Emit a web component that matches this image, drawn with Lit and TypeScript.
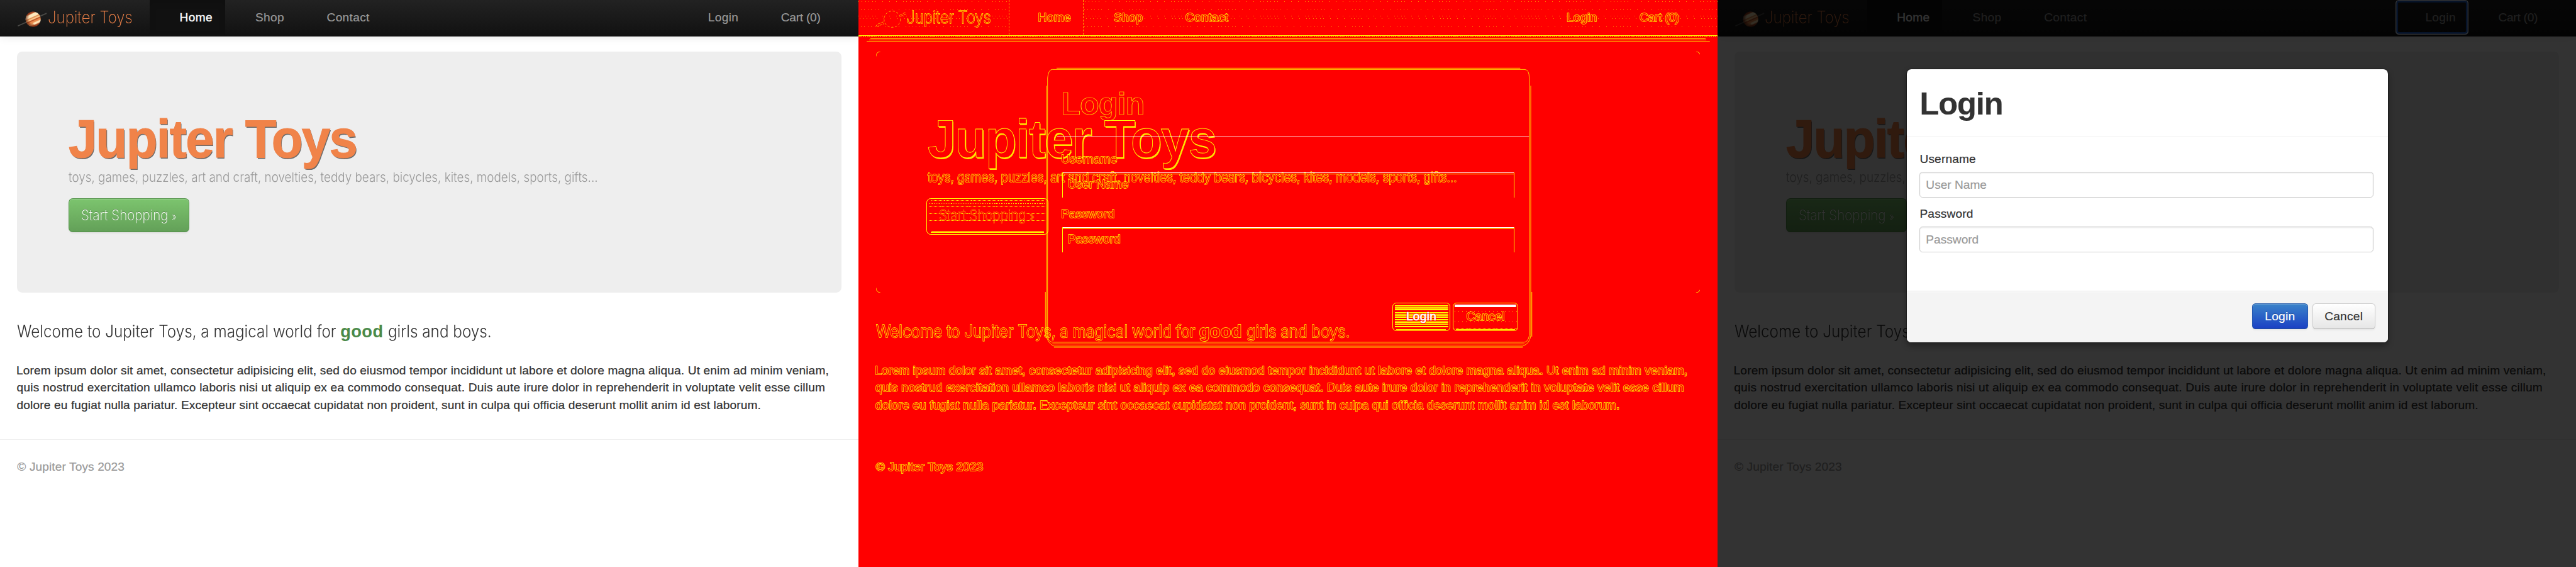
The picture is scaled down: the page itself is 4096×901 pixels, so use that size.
import { LitElement, html, css, svg } from "lit";

const PARAGRAPH = [
  { cls: "l1", text: "Lorem ipsum dolor sit amet, consectetur adipisicing elit, sed do eiusmod tempor incididunt ut labore et dolore magna aliqua. Ut enim ad minim veniam," },
  { cls: "l2", text: "quis nostrud exercitation ullamco laboris nisi ut aliquip ex ea commodo consequat. Duis aute irure dolor in reprehenderit in voluptate velit esse cillum" },
  { cls: "l3", text: "dolore eu fugiat nulla pariatur. Excepteur sint occaecat cupidatat non proident, sunt in culpa qui officia deserunt mollit anim id est laborum." },
];

/** The shop's home page. The "trace" attribute draws only its contours. */
class ToyPage extends LitElement {
  static properties = {
    trace: { type: Boolean, reflect: true },
    focused: { type: Boolean, reflect: true },
  };

  static styles = css`
    :host {
      display: block;
      width: 2000px;
      height: 1320px;
      background: #fff;
      color: #333;
      font: 28px/40px "Liberation Sans", Arial, sans-serif;
      white-space: nowrap;
    }
    .thin {
      display: inline-block;
      font-family: Inter, sans-serif;
      font-weight: 200;
      transform-origin: 0 0;
    }
    .nav {
      position: relative;
      z-index: 1;
      display: flex;
      height: 85px;
      padding: 0 60px 0 40px;
      box-sizing: border-box;
      background: linear-gradient(#222, #111);
      box-shadow: 0 2px 20px rgba(0, 0, 0, 0.1);
      line-height: 81px;
      color: #999;
    }
    .planet {
      width: 73px;
      height: 80px;
      margin-right: -2px;
      flex: none;
    }
    .brand {
      width: 238px;
      color: #f08349;
      font-size: 40px;
    }
    .brand .thin {
      font-weight: 250;
      transform: scaleX(0.882);
    }
    .item {
      height: 80px;
      box-sizing: border-box;
      padding-right: 29px;
      text-align: right;
      letter-spacing: 0.5px;
      -webkit-text-stroke: 0.3px currentColor;
    }
    .home {
      width: 175px;
      background: #111;
      box-shadow: inset 0 6px 16px rgba(0, 0, 0, 0.125);
      color: #fff;
      -webkit-text-stroke: 0.5px #fff;
    }
    .shop { width: 167px; }
    .contact { width: 199px; }
    .login {
      width: 170px;
      margin-left: auto;
      border-radius: 8px;
    }
    .cart {
      width: 191px;
      letter-spacing: -0.36px;
    }
    :host([focused]) .login {
      box-shadow: inset 0 0 0 2px #fff, inset 0 0 0 6px #2262cc;
    }

    .hero {
      position: relative;
      display: flex;
      flex-direction: column;
      align-items: flex-start;
      height: 561px;
      margin: 35px 40px 0;
      padding: 144px 0 0 120px;
      box-sizing: border-box;
      background: #eee;
      border-radius: 12px;
    }
    .title {
      margin: 0;
      font-size: 124px;
      line-height: 120px;
      letter-spacing: -2.6px;
      transform: scaleX(0.963);
      transform-origin: 0 0;
      color: #f08349;
      -webkit-text-stroke: 1.6px #f08349;
      text-shadow: 2px 3px 0 #6b6b6b;
    }
    .tagline {
      font-size: 30px;
      line-height: 60px;
      color: #999;
    }
    .tagline .thin {
      font-weight: 290;
      transform: scaleX(0.921);
    }
    .start {
      width: 281px;
      height: 79px;
      margin-top: 18px;
      padding-left: 28px;
      box-sizing: border-box;
      border: 2px solid #58974f;
      border-bottom-color: #4f8a48;
      border-radius: 10px;
      background: linear-gradient(#7cc46e, #63a058);
      box-shadow: inset 0 2px 0 rgba(255, 255, 255, 0.2), 0 2px 4px rgba(0, 0, 0, 0.05);
      color: #fff;
      font-size: 34px;
      line-height: 77px;
      text-shadow: 0 -2px 0 rgba(0, 0, 0, 0.25);
    }
    .start .thin {
      font-weight: 250;
      transform: scaleX(0.888);
    }
    .raquo { font-size: 25px; }
    .corners { display: none; }

    .welcome {
      display: flex;
      margin: 71px 40px 0;
      font-size: 39px;
    }
    .welcome .a { width: 753px; }
    .welcome .b { width: 111px; }
    .welcome .thin {
      font-weight: 260;
      transform: scaleX(0.912);
    }
    .good {
      color: #4a8a49;
      font-size: 40px;
      letter-spacing: 0.5px;
    }
    .para {
      margin: 49px 38px 0;
      -webkit-text-stroke: 0.35px #333;
    }
    .l1 { letter-spacing: 0.202px; }
    .l2 { letter-spacing: 0.3px; padding-left: 1px; }
    .l3 { letter-spacing: 0.189px; padding-left: 1px; }
    .rule {
      height: 2px;
      margin-top: 60px;
      background: #eee;
    }
    .foot {
      margin: 42px 40px 0;
      color: #999;
      letter-spacing: 0.15px;
      -webkit-text-stroke: 0.3px #999;
    }

    :host([trace]) {
      background: #f00;
      color: #f00;
    }
    :host([trace]) .nav {
      background:
        linear-gradient(#ff0, #ff0) 0 82px / 100% 1.5px no-repeat,
        repeating-linear-gradient(90deg, #ff0 0 3px, #f00 3px 5px) 0 85px / 100% 1.5px no-repeat,
        repeating-linear-gradient(90deg, #f80 0 1px, #f00 1px 8px) 0 3px / 100% 1.5px no-repeat,
        repeating-linear-gradient(90deg, #f80 0 1px, #f00 1px 8px) 5px 22px / 100% 1.5px no-repeat,
        repeating-linear-gradient(90deg, #f80 0 1px, #f00 1px 8px) 0 36px / 100% 1.5px no-repeat,
        repeating-linear-gradient(90deg, #f80 0 1px, #f00 1px 8px) 3px 43px / 100% 1.5px no-repeat,
        repeating-linear-gradient(90deg, #f80 0 1px, #f00 1px 8px) 5px 62px / 100% 1.5px no-repeat,
        linear-gradient(#fc0, #fc0) 50% 89px / 1946px 1.5px no-repeat,
        linear-gradient(#fc0, #fc0) 50% 92px / 1950px 1.5px no-repeat,
        linear-gradient(#fc0, #fc0) 50% 95px / 1964px 1.5px no-repeat;
      height: 98px;
      margin-bottom: -13px;
      box-shadow: none;
    }
    :host([trace]) :is(.brand, .item, .tagline, .start, .welcome, .good, .para, .foot) {
      color: #f00;
      text-shadow: none;
      paint-order: stroke fill;
      -webkit-text-stroke: 2.1px #ff0;
    }
    :host([trace]) :is(.para, .foot, .item) {
      -webkit-text-stroke: 2px #ff0;
    }
    :host([trace]) .home {
      background: #f00;
      box-shadow: none;
      border: dashed #fa0;
      border-width: 0 1px;
      padding-right: 28px;
    }
    :host([trace]) .title {
      color: #f00;
      -webkit-text-stroke: 1.2px #ff0;
      text-shadow: 2px 3px 0 #fd0;
    }
    :host([trace]) .hero { background: none; }
    :host([trace]) .corners {
      display: block;
      position: absolute;
      inset: 0;
    }
    :host([trace]) .start {
      width: 284px;
      height: 84px;
      margin-left: -2px;
      border: 1.5px solid #ff0;
      background:
        linear-gradient(#ff0, #ff0) 50% 74px / 262px 1.5px no-repeat,
        linear-gradient(#ff0, #ff0) 50% 77px / 264px 1.5px no-repeat,
        repeating-linear-gradient(90deg, #ff0 0 1.5px, #f00 1.5px 3px) 50% 3px / 262px 2px no-repeat,
        repeating-linear-gradient(90deg, #ff0 0 1.5px, #f00 1.5px 4px) 50% 9px / 272px 1.5px no-repeat,
        repeating-linear-gradient(90deg, #ff0 0 1.5px, #f00 1.5px 3px) 50% 17px / 272px 1.5px no-repeat,
        repeating-linear-gradient(90deg, #ff0 0 1.5px, #f00 1.5px 3px) 50% 33px / 272px 1.5px no-repeat,
        repeating-linear-gradient(90deg, #ff0 0 1.5px, #f00 1.5px 3px) 50% 49px / 272px 2px no-repeat;
      box-shadow: none;
      -webkit-text-stroke: 1.3px #fb0;
    }
    :host([trace]) .rule { background: none; }
  `;

  declare trace: boolean;
  declare focused: boolean;

  planet() {
    if (this.trace) {
      return svg`
        <g fill="none" stroke="#fc0" stroke-width="1.2">
          <circle cx="37.7" cy="44.7" r="19" stroke-dasharray="5 4"/>
          <path d="M-1 61 4 56 17 51M1 62 19 55M56 35 68 29M57 38 71 32" stroke-dasharray="6 2"/>
        </g>`;
    }
    return svg`
      <defs>
        <radialGradient id="shade" cx="0.6" cy="0.45" r="0.6">
          <stop offset="0.6" stop-color="#5a1a08" stop-opacity="0"/>
          <stop offset="1" stop-color="#5a1a08" stop-opacity="0.75"/>
        </radialGradient>
        <clipPath id="disc"><circle cx="37.7" cy="44.7" r="17.6"/></clipPath>
        <filter id="soft"><feGaussianBlur stdDeviation="0.8"/></filter>
      </defs>
      <path d="M2 60.5 69 31" stroke="#4a4a46" stroke-width="2.6" fill="none" filter="url(#soft)"/>
      <g clip-path="url(#disc)">
        <g transform="rotate(-24 37.7 44.7)" filter="url(#soft)">
          <rect x="15" y="20" width="46" height="50" fill="#d9793f"/>
          <rect x="15" y="26" width="46" height="5" fill="#b8502a"/>
          <rect x="15" y="32" width="46" height="7.5" fill="#ffe9bd"/>
          <rect x="15" y="39.5" width="46" height="2.5" fill="#e08a4c"/>
          <rect x="15" y="42" width="46" height="3.4" fill="#fbc98c"/>
          <rect x="15" y="45.4" width="46" height="3" fill="#c2592a"/>
          <rect x="15" y="48.4" width="46" height="5" fill="#ec8c4e"/>
          <rect x="15" y="53.4" width="46" height="3" fill="#e3a46c"/>
          <rect x="34" y="52.5" width="26" height="5.5" fill="#ffe3b4"/>
          <rect x="15" y="58" width="46" height="6" fill="#b04a22"/>
        </g>
        <circle cx="37.7" cy="44.7" r="18" fill="url(#shade)"/>
      </g>`;
  }

  render() {
    return html`
      <nav class="nav">
        <svg class="planet" viewBox="0 0 73 80" overflow="visible">${this.planet()}</svg>
        <div class="brand"><span class="thin">Jupiter Toys</span></div>
        <div class="item home">Home</div>
        <div class="item shop">Shop</div>
        <div class="item contact">Contact</div>
        <div class="item login">Login</div>
        <div class="item cart">Cart (0)</div>
      </nav>
      <section class="hero">
        <svg class="corners" viewBox="0 0 1920 561" fill="none" stroke="#ff0" stroke-width="1.2">
          <path d="M0 11A10 10 0 0 1 10 0M1910 0A10 10 0 0 1 1920 11M0 550A10 10 0 0 0 10 561M1910 561A10 10 0 0 0 1920 550"/>
        </svg>
        <h1 class="title">Jupiter Toys</h1>
        <div class="tagline"><span class="thin">toys, games, puzzles, art and craft, novelties, teddy bears, bicycles, kites, models, sports, gifts...</span></div>
        <div class="start"><span class="thin">Start Shopping <span class="raquo">»</span></span></div>
      </section>
      <div class="welcome">
        <div class="a"><span class="thin">Welcome to Jupiter Toys, a magical world for</span></div>
        <div class="b"><strong class="good">good</strong></div>
        <span class="thin">girls and boys.</span>
      </div>
      <div class="para">${PARAGRAPH.map((l) => html`<div class=${l.cls}>${l.text}</div>`)}</div>
      <div class="rule"></div>
      <div class="foot">© Jupiter Toys 2023</div>
    `;
  }
}
customElements.define("toy-page", ToyPage);

/** The sign-in dialog. The "trace" attribute draws only its contours. */
class LoginDialog extends LitElement {
  static properties = { trace: { type: Boolean, reflect: true } };

  static styles = css`
    :host {
      display: flex;
      flex-direction: column;
      width: 1124px;
      height: 638px;
      box-sizing: border-box;
      border: 2px solid rgba(0, 0, 0, 0.3);
      border-radius: 12px;
      background: #fff;
      background-clip: padding-box;
      box-shadow: 0 6px 14px rgba(0, 0, 0, 0.3);
      color: #333;
      font: 28px/40px "Liberation Sans", Arial, sans-serif;
      white-space: nowrap;
      -webkit-text-stroke: 0.3px currentColor;
    }
    .head {
      height: 158px;
      box-sizing: border-box;
      padding: 2px 30px 0;
      border-bottom: 2px solid #eee;
    }
    .title {
      margin: 0;
      font-size: 74px;
      line-height: 156px;
      letter-spacing: -1.54px;
    }
    .body {
      flex: 1;
      padding: 30px 34px 0 30px;
    }
    .label { letter-spacing: 0.2px; }
    .field {
      height: 60px;
      margin: 10px 0 18px;
      padding-left: 13px;
      box-sizing: border-box;
      border: 2px solid #ccc;
      border-radius: 7px;
      box-shadow: inset 0 2px 3px rgba(0, 0, 0, 0.09);
      color: #999;
      line-height: 58px;
    }
    .foot {
      display: flex;
      justify-content: flex-end;
      gap: 10px;
      height: 120px;
      box-sizing: border-box;
      padding: 28px 30px 0 0;
      border-top: 2px solid #ddd;
      border-radius: 0 0 10px 10px;
      background: #f4f4f4;
      box-shadow: inset 0 2px 0 #fff;
    }
    .btn {
      height: 60px;
      box-sizing: border-box;
      border: 2px solid #ccc;
      border-bottom-color: #b3b3b3;
      border-radius: 8px;
      line-height: 58px;
      text-align: center;
      letter-spacing: 0.4px;
    }
    .ok {
      width: 130px;
      border-color: #2a60ac #2458b0 #234f98;
      background: linear-gradient(#3a83c9, #1b41c4);
      box-shadow: inset 0 2px 0 rgba(255, 255, 255, 0.2), 0 2px 4px rgba(0, 0, 0, 0.05);
      color: #fff;
      text-shadow: 0 -2px 0 rgba(0, 0, 0, 0.25);
    }
    .cancel {
      width: 147px;
      background: linear-gradient(#fff, #e6e6e6);
      box-shadow: 0 2px 4px rgba(0, 0, 0, 0.05);
      text-shadow: 0 2px 2px rgba(255, 255, 255, 0.75);
    }
    .frame { display: none; }

    :host([trace]) {
      background: none;
      border-color: transparent;
      box-shadow: none;
      color: #f00;
    }
    :host([trace]) .title {
      color: transparent;
      -webkit-text-stroke: 1px #fe0;
    }
    :host([trace]) :is(.label, .field, .cancel) {
      color: #f00;
      text-shadow: none;
      paint-order: stroke fill;
      -webkit-text-stroke: 2px #ff0;
    }
    :host([trace]) .head {
      border-bottom-color: transparent;
      background: linear-gradient(#fff, #fff) 100% 156px / 1100px 2px no-repeat;
      background-origin: border-box;
      background-clip: border-box;
    }
    :host([trace]) .field {
      border: solid #ff0;
      border-width: 0 1.5px;
      border-radius: 0;
      margin: 12px 1px 18px 2px;
      height: 58px;
      padding-left: 12px;
      line-height: 57px;
      background:
        linear-gradient(#fff, #fff) 0 0 / 100% 1.6px no-repeat,
        linear-gradient(#ff0, #ff0) 0 3px / 100% 1.5px no-repeat;
      box-shadow: none;
    }
    :host([trace]) .foot {
      background: none;
      border-color: transparent;
      box-shadow: none;
      padding: 27px 26px 0 0;
      gap: 5px;
    }
    :host([trace]) .btn {
      height: 65px;
      border: 1.5px solid #ff0;
      border-radius: 9px;
      line-height: 61px;
      box-shadow: none;
    }
    :host([trace]) .ok {
      width: 136px;
      background:
        repeating-linear-gradient(#ff0 0 3px, #f00 3px 4.5px, #ff0 4.5px 5.5px, #f00 5.5px 8px) 50% 4px / 124px 53px no-repeat,
        linear-gradient(#ff0, #ff0) 50% 60px / 116px 1.5px no-repeat;
      color: #fff;
      -webkit-text-stroke: 1px #fff;
      text-shadow: 0 0 3px #f00, 0 0 3px #f00, 0 0 3px #f00;
    }
    :host([trace]) .cancel {
      width: 153px;
      background:
        linear-gradient(#fff, #fff) 50% 2px / 143px 6px no-repeat,
        repeating-linear-gradient(90deg, #ff0 0 1.5px, #f00 1.5px 9px) 50% 17px / 145px 1.5px no-repeat,
        repeating-linear-gradient(90deg, #ff0 0 1.5px, #f00 1.5px 9px) 50% 42px / 145px 1.5px no-repeat,
        repeating-linear-gradient(90deg, #ff0 0 1.5px, #f00 1.5px 3px) 50% 57px / 145px 1.5px no-repeat,
        linear-gradient(#ff0, #ff0) 50% 60px / 138px 1.5px no-repeat;
    }
    :host([trace]) .frame {
      display: block;
      position: absolute;
      left: -2px;
      top: -2px;
      width: 1124px;
      height: 638px;
      overflow: visible;
    }
  `;

  declare trace: boolean;

  render() {
    return html`
      <svg class="frame" viewBox="0 0 1124 638" fill="none" stroke="#ff0" stroke-width="1.2">
        <path d="M1 622V22Q3 2 12 2H1112Q1123 2 1123 22V622Q1120 637 1110 637H14Q3 637 1 622Z"/>
        <path d="M22 -1H1102M-2 40V622Q2 640 16 646H1108Q1124 640 1126.500 622V40"/>
        <path d="M-4 520V624M1129 520V624M12 641H1112M16 649H1108"/>
      </svg>
      <div class="head"><h2 class="title">Login</h2></div>
      <div class="body">
        <div class="label">Username</div>
        <div class="field">User Name</div>
        <div class="label">Password</div>
        <div class="field">Password</div>
      </div>
      <div class="foot">
        <div class="btn ok">Login</div>
        <div class="btn cancel">Cancel</div>
      </div>
    `;
  }
}
customElements.define("login-dialog", LoginDialog);

class AppRoot extends LitElement {
  static styles = css`
    :host {
      display: block;
      width: 4096px;
      height: 901px;
      overflow: hidden;
    }
    .stage {
      display: flex;
      width: 6000px;
      height: 1320px;
      zoom: 0.682667;
    }
    .panel {
      position: relative;
      flex: none;
      width: 2000px;
      height: 1320px;
      overflow: hidden;
    }
    .backdrop {
      position: absolute;
      inset: 0;
      z-index: 2;
      background: rgba(0, 0, 0, 0.8);
    }
    .dialog {
      position: absolute;
      left: 440px;
      top: 160px;
      z-index: 3;
    }
  `;

  render() {
    return html`
      <div class="stage">
        <div class="panel"><toy-page></toy-page></div>
        <div class="panel">
          <toy-page trace></toy-page>
          <login-dialog class="dialog" trace></login-dialog>
        </div>
        <div class="panel">
          <toy-page focused></toy-page>
          <div class="backdrop"></div>
          <login-dialog class="dialog"></login-dialog>
        </div>
      </div>
    `;
  }
}
customElements.define("app-root", AppRoot);
